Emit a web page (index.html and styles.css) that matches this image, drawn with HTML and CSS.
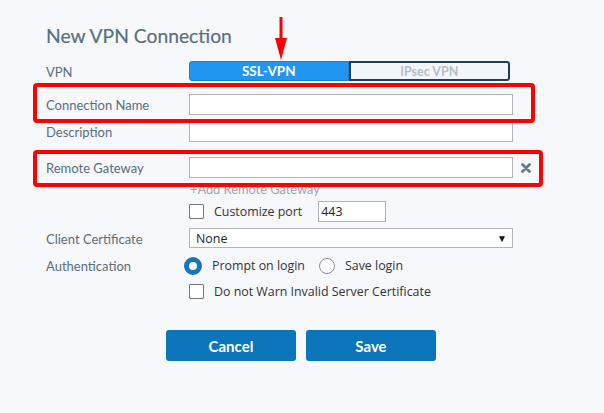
FILE: index.html
```html
<!DOCTYPE html>
<html lang="en">
<head>
  <meta charset="UTF-8" />
  <title>New VPN Connection</title>
  <link rel="stylesheet" href="styles.css">
</head>
<body>
  <div class="page">
    <h1 class="title">New VPN Connection</h1>

    <div class="row row-vpn">
      <span class="label">VPN</span>
      <div class="toggle">
        <span class="toggle-opt active">SSL-VPN</span>
        <span class="toggle-opt">IPsec VPN</span>
      </div>
    </div>

    <div class="row row-name">
      <span class="label">Connection Name</span>
      <input class="text-input" type="text" />
    </div>

    <div class="row row-desc">
      <span class="label">Description</span>
      <input class="text-input" type="text" />
    </div>

    <div class="row row-gateway">
      <span class="label">Remote Gateway</span>
      <input class="text-input" type="text" />
      <svg class="remove-icon" width="10" height="10" viewBox="0 0 10 10">
        <path d="M1.5 1.5 L8.5 8.5 M8.5 1.5 L1.5 8.5" stroke="#687b88" stroke-width="2.8" stroke-linecap="round" />
      </svg>
    </div>

    <div class="add-link">+Add Remote Gateway</div>

    <div class="row row-port">
      <span class="label"></span>
      <span class="checkbox"></span>
      <span class="ctl-text">Customize port</span>
      <input class="port-input" type="text" value="443" />
    </div>

    <div class="row row-cert">
      <span class="label">Client Certificate</span>
      <div class="select">
        <span>None</span>
        <span class="caret">&#9660;</span>
      </div>
    </div>

    <div class="row row-auth">
      <span class="label">Authentication</span>
      <span class="radio checked"></span>
      <span class="ctl-text">Prompt on login</span>
      <span class="radio"></span>
      <span class="ctl-text">Save login</span>
    </div>

    <div class="row row-warn">
      <span class="label"></span>
      <span class="checkbox"></span>
      <span class="ctl-text">Do not Warn Invalid Server Certificate</span>
    </div>

    <div class="actions">
      <button class="btn">Cancel</button>
      <button class="btn">Save</button>
    </div>

    <!-- annotations drawn over the form -->
    <svg class="arrow" width="14" height="44" viewBox="0 0 14 44">
      <rect x="5.5" y="0" width="3" height="24" fill="#f00" />
      <polygon points="1,21 13,21 7,43" fill="#f00" />
    </svg>
    <div class="mark mark-name"></div>
    <div class="mark mark-gateway"></div>
  </div>
</body>
</html>
```

FILE: styles.css
```css
* {
  box-sizing: border-box;
  margin: 0;
  padding: 0;
}

body {
  background: #f7f8fb;
  font-family: Lato, 'Open Sans', sans-serif;
  color: #5a6d7b;
}

.page {
  position: relative;
  width: 604px;
  height: 413px;
  padding: 24px 0 0 46px;
}

.title {
  font-size: 19.3px;
  font-weight: normal;
  line-height: 24px;
  color: #58707f;
  -webkit-text-stroke: 0.2px #58707f;
}

.row {
  display: flex;
  align-items: center;
}

.label {
  width: 143px;
  flex-shrink: 0;
  font-size: 13px;
  padding-top: 1px;
}

.row-vpn { height: 20px; margin-top: 13px; }
.row-name { height: 21px; margin-top: 13px; }
.row-desc { height: 21px; margin-top: 6px; }
.row-gateway { height: 21px; margin-top: 15px; }
.row-port { height: 21px; margin-top: 5px; }
.row-cert { height: 20px; margin-top: 6px; }
.row-auth { height: 19px; margin-top: 8px; }
.row-warn { height: 17px; margin-top: 8px; }

.toggle {
  display: flex;
  width: 321px;
  height: 20px;
}

.toggle-opt {
  flex: 1;
  display: flex;
  align-items: center;
  justify-content: center;
  font-family: 'Liberation Sans Narrow', Lato, sans-serif;
  font-size: 12.5px;
  font-weight: bold;
  color: #b4bec6;
  background: #f3f6f9;
  border: 2px solid #1c3f5e;
  border-radius: 0 3px 3px 0;
}

.toggle-opt.active {
  font-size: 13.5px;
  color: #fff;
  background: #2196f0;
  border: 1px solid #1a7fcf;
  border-radius: 3px 0 0 3px;
}

.text-input {
  width: 324px;
  height: 21px;
  background: #fff;
  border: 1px solid #b4b4b4;
}

.remove-icon {
  margin-left: 8px;
}

.add-link {
  margin: 4px 0 0 144px;
  height: 14px;
  font-size: 12.8px;
  line-height: 14px;
  color: #9aa6b0;
}

.checkbox {
  width: 15px;
  height: 15px;
  background: #fff;
  border: 1px solid #777;
  border-radius: 1px;
  flex-shrink: 0;
}

.ctl-text {
  font-family: 'Open Sans', sans-serif;
  font-size: 12.4px;
  color: #333;
  margin-left: 10px;
}

.port-input {
  width: 68px;
  height: 21px;
  margin-left: 16px;
  padding-left: 2px;
  border: 1px solid #b4b4b4;
  font-family: 'Open Sans', sans-serif;
  font-size: 12.4px;
  color: #222;
}

.select {
  width: 324px;
  height: 20px;
  display: flex;
  align-items: center;
  justify-content: space-between;
  padding: 0 5px 0 6px;
  background: #fff;
  border: 1px solid #b4b4b4;
  font-family: 'Open Sans', sans-serif;
  font-size: 12.4px;
  color: #222;
}

.caret {
  font-size: 10px;
  color: #111;
}

.radio {
  width: 16px;
  height: 16px;
  border-radius: 50%;
  border: 1px solid #8c8c8c;
  background: #fff;
  flex-shrink: 0;
  margin-left: 14px;
}

.radio.checked {
  width: 18px;
  height: 18px;
  border: 5px solid #1a74b8;
  margin-left: -5px;
}

.actions {
  display: flex;
  gap: 10px;
  margin: 30px 0 0 120px;
}

.btn {
  width: 130px;
  height: 31px;
  background: #0b75ba;
  color: #fff;
  border: none;
  border-radius: 3px;
  font-family: Lato, sans-serif;
  font-size: 15px;
  font-weight: bold;
}

.arrow {
  position: absolute;
  left: 274px;
  top: 17px;
}

.mark {
  position: absolute;
  border: 4px solid #f00;
  border-radius: 4px;
}

.mark-name {
  left: 33px;
  top: 83px;
  width: 502px;
  height: 40px;
}

.mark-gateway {
  left: 33px;
  top: 150px;
  width: 510px;
  height: 37px;
}
```
